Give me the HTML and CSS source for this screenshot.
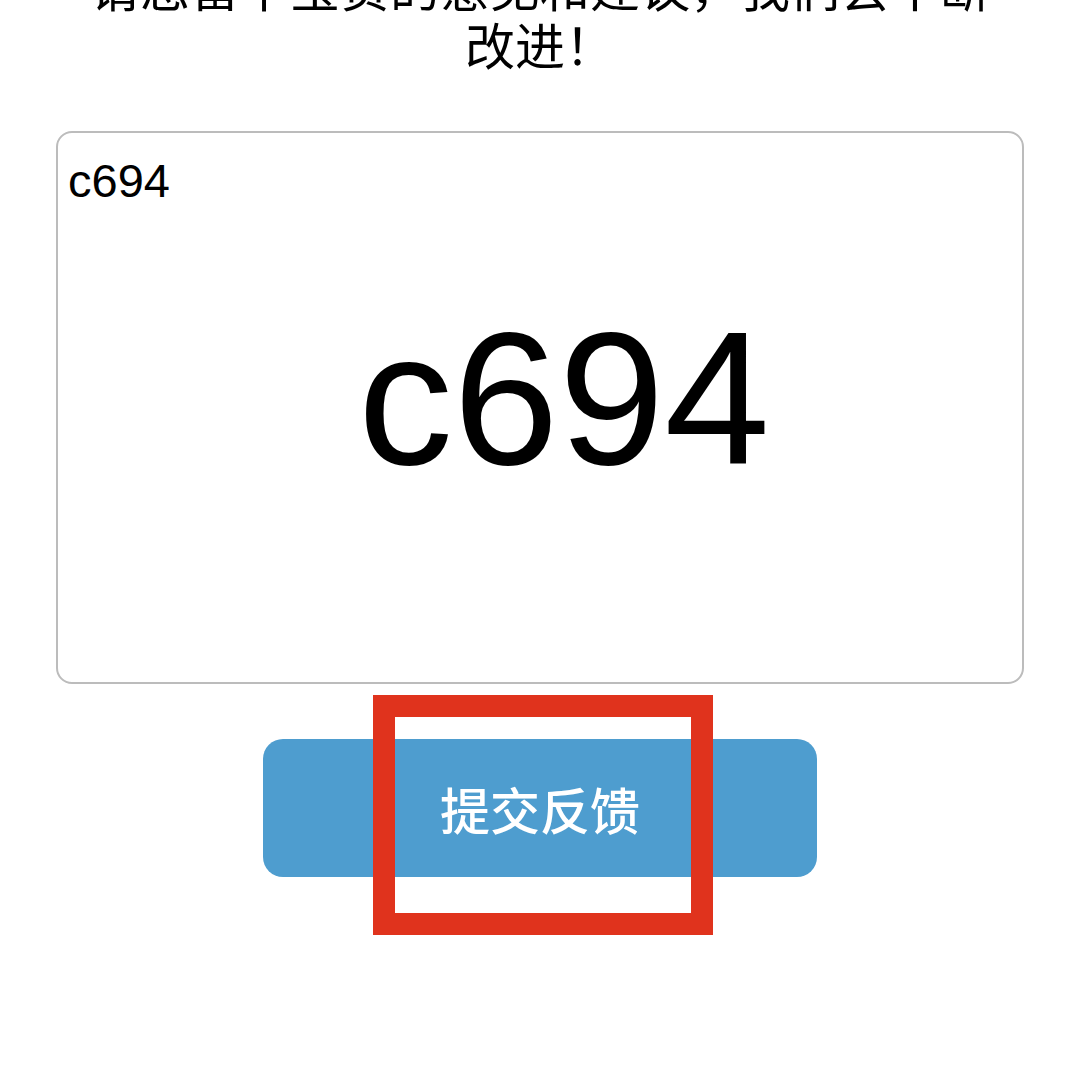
FILE: index.html
```html
<!DOCTYPE html>
<html lang="zh-CN">
<head>
<meta charset="utf-8">
<title>意见反馈</title>
<link rel="stylesheet" href="styles.css">
</head>
<body>
<main class="page">
  <p class="intro">请您留下宝贵的意见和建议，我们会不断改进！</p>
  <div class="field">
    <textarea class="input">c694</textarea>
    <div class="watermark">c694</div>
  </div>
  <div class="actions">
    <button class="submit" type="button">提交反馈</button>
    <span class="highlight"></span>
  </div>
</main>
</body>
</html>
```

FILE: styles.css
```css
html, body {
  margin: 0;
  padding: 0;
  background: #ffffff;
}

body {
  width: 1080px;
  height: 1080px;
  overflow: hidden;
  font-family: "Noto Sans CJK SC", "Liberation Sans", sans-serif;
  color: #000000;
}

.page {
  display: flex;
  flex-direction: column;
}

.intro {
  margin: -44px 0 59px;
  padding: 0 80px;
  font-size: 50px;
  line-height: 58px;
  text-align: center;
  font-weight: 400;
}

.field {
  position: relative;
  margin: 0 56px;
  height: 553px;
}

.input {
  display: block;
  box-sizing: border-box;
  width: 100%;
  height: 100%;
  margin: 0;
  padding: 20px 10px;
  border: 2px solid #bcbcbc;
  border-radius: 16px;
  font-family: "Liberation Sans", Arial, sans-serif;
  font-size: 47px;
  color: #000000;
  background: #ffffff;
  resize: none;
  outline: none;
}

.watermark {
  position: absolute;
  left: 302px;
  top: 172px;
  font-family: "Liberation Sans", Arial, sans-serif;
  font-size: 190px;
  line-height: 1;
  color: #000000;
  pointer-events: none;
}

.actions {
  position: relative;
  align-self: center;
  margin-top: 55px;
  width: 554px;
}

.submit {
  display: block;
  width: 554px;
  height: 138px;
  border: none;
  border-radius: 20px;
  background: #4e9dcf;
  color: #ffffff;
  font-family: "Noto Sans CJK SC", sans-serif;
  font-size: 50px;
  font-weight: 500;
  padding: 0;
}

.highlight {
  position: absolute;
  left: 110px;
  top: -44px;
  width: 340px;
  height: 240px;
  box-sizing: border-box;
  border: 22px solid #e0331d;
  pointer-events: none;
}
```
